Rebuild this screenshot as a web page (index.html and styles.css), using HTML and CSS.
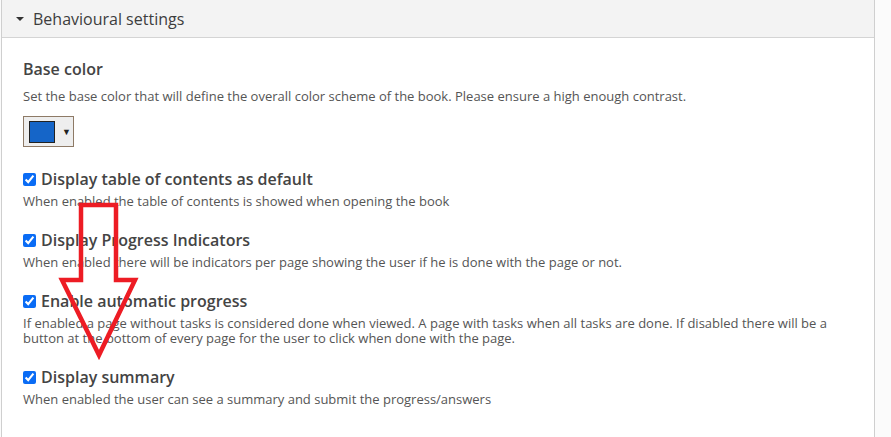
FILE: index.html
```html
<!DOCTYPE html>
<html>
<head>
    <meta charset="UTF-8">
    <title>Behavioural settings</title>
    <link rel="stylesheet" href="styles.css">
</head>
<body>
<div class="group">
    <div class="group-title">
        <span class="caret"></span>
        <span>Behavioural settings</span>
    </div>
    <div class="group-body">
        <div class="field field-color">
            <div class="field-label">Base color</div>
            <div class="field-desc">Set the base color that will define the overall color scheme of the book. Please ensure a high enough contrast.</div>
            <div class="color-picker">
                <span class="swatch"></span>
                <span class="picker-arrow">&#9660;</span>
            </div>
        </div>

        <div class="field">
            <label class="check-label"><input type="checkbox" checked> Display table of contents as default</label>
            <div class="field-desc">When enabled the table of contents is showed when opening the book</div>
        </div>

        <div class="field">
            <label class="check-label"><input type="checkbox" checked> Display Progress Indicators</label>
            <div class="field-desc">When enabled there will be indicators per page showing the user if he is done with the page or not.</div>
        </div>

        <div class="field">
            <label class="check-label"><input type="checkbox" checked> Enable automatic progress</label>
            <div class="field-desc">If enabled a page without tasks is considered done when viewed. A page with tasks when all tasks are done. If disabled there will be a button at the bottom of every page for the user to click when done with the page.</div>
        </div>

        <div class="field">
            <label class="check-label"><input type="checkbox" checked> Display summary</label>
            <div class="field-desc">When enabled the user can see a summary and submit the progress/answers</div>
        </div>
    </div>

    <!-- red annotation arrow drawn over the screenshot -->
    <svg class="annotation" width="100" height="170" viewBox="0 0 100 170">
        <polygon points="29,6 64,6 64,81 83,81 47,156 10,81 29,81"
                 fill="none" stroke="#ed1c24" stroke-width="4.5" stroke-miterlimit="4"/>
    </svg>
</div>
</body>
</html>
```

FILE: styles.css
```css
body {
    margin: 0;
    background-color: #fbfbfb;
    font-family: "Open Sans", "Noto Sans", sans-serif;
    color: #444;
}

.group {
    position: relative;
    width: 874px;
    height: 437px;
    margin-left: 1px;
    border: 1px solid #cfcfcf;
    border-top: none;
    border-bottom: none;
    background-color: #fff;
    box-sizing: border-box;
}

.group-title {
    display: flex;
    align-items: center;
    gap: 9px;
    height: 38px;
    padding-left: 14px;
    background-color: #f3f3f3;
    border-bottom: 1px solid #d4d4d4;
    box-sizing: border-box;
    font-size: 16px;
    color: #3d3d3d;
}

.caret {
    width: 0;
    height: 0;
    border-left: 4px solid transparent;
    border-right: 4px solid transparent;
    border-top: 4px solid #333;
    margin-top: 1px;
}

.group-body {
    padding: 21px 20px 0 21px;
}

.field {
    margin-bottom: 21px;
}

.field-color {
    margin-bottom: 22px;
}

.field-label {
    font-size: 16px;
    font-weight: 600;
    color: #444;
    line-height: 20px;
}

.field-desc {
    font-size: 13px;
    line-height: 15px;
    color: #555;
    margin-top: 5px;
}

.field-color .field-desc {
    margin-top: 10px;
}

.color-picker {
    display: flex;
    align-items: center;
    gap: 7px;
    width: 51px;
    height: 31px;
    margin-top: 12px;
    padding-left: 5px;
    border: 1px solid #8e7a66;
    background-color: #eee;
    box-sizing: border-box;
}

.swatch {
    width: 26px;
    height: 22px;
    background-color: #1565c8;
    border: 1px solid #222;
    box-sizing: border-box;
}

.picker-arrow {
    font-size: 9px;
    color: #222;
}

.check-label {
    display: flex;
    align-items: center;
    gap: 5px;
    font-size: 16px;
    font-weight: 600;
    color: #444;
    line-height: 20px;
}

.check-label input {
    width: 13px;
    height: 13px;
    margin: 0;
    accent-color: #0a6cf5;
}

.annotation {
    position: absolute;
    left: 50px;
    top: 199px;
}
```
